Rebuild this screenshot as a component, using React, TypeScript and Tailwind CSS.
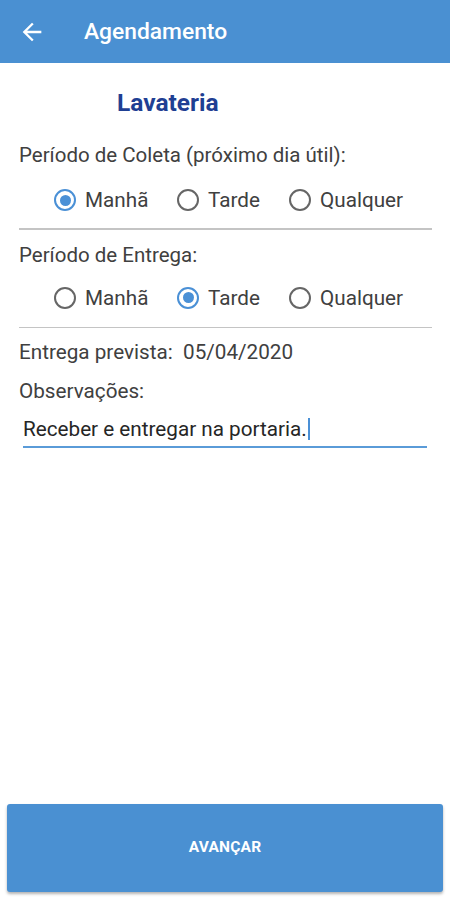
import React from "react";

function Radio({ checked, label }: { checked: boolean; label: string }) {
  return (
    <div className="flex items-center h-[24px]">
      <div
        className={
          checked
            ? "w-[22px] h-[22px] rounded-full border-2 border-[#4a90d6] flex items-center justify-center shrink-0"
            : "w-[22px] h-[22px] rounded-full border-2 border-[#666666] shrink-0"
        }
      >
        {checked && <div className="w-[11px] h-[11px] rounded-full bg-[#4a90d6]" />}
      </div>
      <span className="ml-[9px] text-[20.7px] text-[#404040] leading-[24px]">{label}</span>
    </div>
  );
}

export default function App() {
  return (
    <div
      className="w-[450px] h-[900px] bg-white flex flex-col"
      style={{ fontFamily: "Roboto, 'Noto Sans', sans-serif" }}
    >
      <div className="h-[63px] bg-[#4a90d2] flex items-center shrink-0">
        <svg className="ml-[18px]" width="28" height="28" viewBox="0 0 24 24" fill="white">
          <path d="M20 11H7.83l5.59-5.59L12 4l-8 8 8 8 1.41-1.41L7.83 13H20v-2z" />
        </svg>
        <span className="ml-[38px] text-[22.8px] font-medium text-white leading-[28px]">Agendamento</span>
      </div>

      <div className="px-[19px] flex-1 flex flex-col">
        <div className="mt-[25px] pl-[98px] text-[24.5px] font-bold text-[#1f3f93] leading-[30px]">Lavateria</div>

        <div className="mt-[25px] text-[20.5px] text-[#404040] leading-[24px]">Período de Coleta (próximo dia útil):</div>
        <div className="mt-[21px] flex pl-[35px]">
          <div className="w-[123px]"><Radio checked label="Manhã" /></div>
          <div className="w-[112px]"><Radio checked={false} label="Tarde" /></div>
          <Radio checked={false} label="Qualquer" />
        </div>
        <div className="mt-[16px] h-[1.5px] bg-[#c4c4c4] mr-[-1px]" />

        <div className="mt-[13px] text-[20.5px] text-[#404040] leading-[24px]">Período de Entrega:</div>
        <div className="mt-[19px] flex pl-[35px]">
          <div className="w-[123px]"><Radio checked={false} label="Manhã" /></div>
          <div className="w-[112px]"><Radio checked label="Tarde" /></div>
          <Radio checked={false} label="Qualquer" />
        </div>
        <div className="mt-[17px] h-[1.5px] bg-[#c4c4c4] mr-[-1px]" />

        <div className="mt-[12px] text-[20.7px] text-[#404040] leading-[24px] whitespace-pre">Entrega prevista:  05/04/2020</div>
        <div className="mt-[15px] text-[20.7px] text-[#404040] leading-[24px]">Observações:</div>
        <div className="mt-[14px] ml-[4px] mr-[4px] border-b-[2px] border-[#5a9bd8] pb-[5px] flex items-center">
          <span className="text-[20.7px] text-[#262626] leading-[24px]">Receber e entregar na portaria.</span>
          <span className="w-[2px] h-[22px] bg-[#4a90d6] ml-[1px]" />
        </div>

        <div className="flex-1" />
      </div>

      <div className="px-[7px] pb-[8px]">
        <div className="h-[88px] bg-[#4a90d2] rounded-[3px] shadow-[0_2px_3px_rgba(0,0,0,0.3)] flex items-center justify-center">
          <span className="text-[15.5px] font-bold text-white tracking-[0.2px]">AVANÇAR</span>
        </div>
      </div>
    </div>
  );
}
